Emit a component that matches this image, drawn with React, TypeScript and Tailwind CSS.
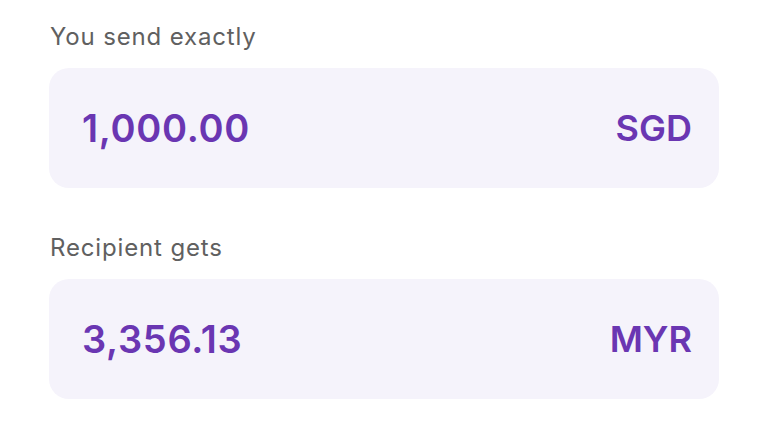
import React from "react";

function Field({ label, amount, currency }: { label: string; amount: string; currency: string }) {
  return (
    <div className="flex flex-col">
      <div className="h-[30px] leading-[30px] text-[24px] tracking-[0.85px] text-[#606060] pl-px -mt-[2px]">
        {label}
      </div>
      <div className="mt-[16px] h-[120px] rounded-[20px] bg-[#f5f3fb] flex items-center justify-between pl-[33px] pr-[27px]">
        <span className="text-[38px] font-semibold tracking-[0.7px] text-[#6a36b2] leading-none">{amount}</span>
        <span className="text-[36px] font-semibold text-[#6a36b2] leading-none">{currency}</span>
      </div>
    </div>
  );
}

export default function App() {
  return (
    <div className="w-[768px] h-[429px] bg-white px-[49px] pt-[24px] flex flex-col gap-[47px]" style={{ fontFamily: "Inter, 'Noto Sans', sans-serif" }}>
      <Field label="You send exactly" amount="1,000.00" currency="SGD" />
      <Field label="Recipient gets" amount="3,356.13" currency="MYR" />
    </div>
  );
}
